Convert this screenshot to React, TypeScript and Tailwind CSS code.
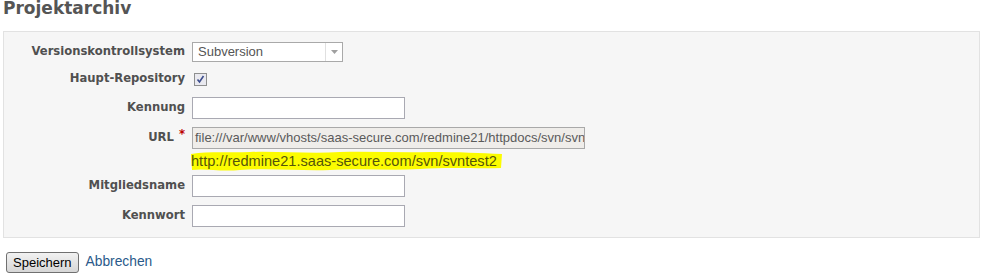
import React from "react";

const labelCls =
  "w-[189px] shrink-0 text-right pr-[7px] font-bold text-[11.6px] text-[#505050] leading-none";

function Row({
  label,
  children,
  className,
  req,
}: {
  label: string;
  children: React.ReactNode;
  className: string;
  req?: boolean;
}) {
  return (
    <div className={"flex items-center " + className}>
      <div className={labelCls}>
        {label}
        {req ? <span className="text-[#bb0000] ml-[5px] relative top-[-3px]">*</span> : null}
      </div>
      {children}
    </div>
  );
}

export default function App() {
  return (
    <div
      className="w-[987px] h-[278px] bg-white overflow-hidden relative"
      style={{ fontFamily: '"DejaVu Sans", Verdana, sans-serif' }}
    >
      <h2 className="absolute left-[3px] top-[-4px] text-[17px] font-bold text-[#555555] leading-[24px] m-0">
        Projektarchiv
      </h2>
      <div className="ml-[3px] mt-[31px] w-[977px] h-[207px] border border-[#e2e2e2] bg-[#f6f6f6] pt-[9px]">
        <Row label="Versionskontrollsystem" className="h-[21px] -ml-[1px]">
          <div className="w-[151px] h-[20px] border border-[#a9a9a9] bg-white flex items-center">
            <span
              className="flex-1 pl-[5px] text-[13px] text-[#555555]"
              style={{ fontFamily: '"Liberation Sans", Arial, sans-serif' }}
            >
              Subversion
            </span>
            <div className="w-[17px] h-[18px] border-l border-[#e0e0e0] flex items-center justify-center">
              <svg width="7" height="4" viewBox="0 0 7 4">
                <path d="M0 0 H7 L3.5 4 Z" fill="#a0a0a0" />
              </svg>
            </div>
          </div>
        </Row>
        <Row label="Haupt-Repository" className="h-[22px] mt-[6px] -ml-[1px]">
          <div className="w-[13px] h-[13px] ml-[2px] border border-[#8e8f8f] bg-[#e9e9ef] flex items-center justify-center">
            <svg width="9" height="9" viewBox="0 0 9 9">
              <path d="M1.5 4.5 L3.5 7 L7.5 1" stroke="#3c4d8c" strokeWidth="1.6" fill="none" />
            </svg>
          </div>
        </Row>
        <Row label="Kennung" className="h-[21px] mt-[7px] -ml-[1px]">
          <div className="w-[213px] h-[22px] border border-[#a9a9b2] bg-white" />
        </Row>
        <Row label="URL" className="h-[21px] mt-[9px] -ml-[1px]" req>
          <div className="w-[393px] h-[22px] border border-[#a9a9a9] bg-[#efedea] overflow-hidden flex items-center">
            <span
              className="pl-[2px] whitespace-nowrap text-[13px] text-[#5a5a5a]"
              style={{ fontFamily: '"Liberation Sans", Arial, sans-serif' }}
            >
              file:///var/www/vhosts/saas-secure.com/redmine21/httpdocs/svn/svntest2
            </span>
          </div>
        </Row>
        <div className="ml-[186px] mt-[2px] h-[22px] w-[313px] relative">
          <svg className="absolute inset-0" width="313" height="22" viewBox="0 0 313 22">
            <path
              d="M1 4 C20 1 40 3 60 2 C90 1 120 4 150 2 C180 1 210 3 240 2 C270 2 290 3 312 4 L311 18 C290 19 260 17 230 19 C200 21 170 18 140 20 C110 21 80 18 50 20 C30 22 15 18 2 20 Z"
              fill="#fcfc00"
            />
          </svg>
          <span
            className="relative block pl-[1px] pt-[2px] text-[14.6px] leading-[18px] text-[#55550a] whitespace-nowrap"
            style={{ fontFamily: '"Liberation Sans", Arial, sans-serif' }}
          >
            http://redmine21.saas-secure.com/svn/svntest2
          </span>
        </div>
        <Row label="Mitgliedsname" className="h-[21px] mt-[3px] -ml-[1px]">
          <div className="w-[213px] h-[22px] border border-[#a9a9b2] bg-white" />
        </Row>
        <Row label="Kennwort" className="h-[21px] mt-[9px] -ml-[1px]">
          <div className="w-[213px] h-[22px] border border-[#a9a9b2] bg-white" />
        </Row>
      </div>
      <div className="flex items-center mt-[14px] ml-[6px]">
        <button
          className="h-[21px] px-[6px] border border-[#707070] rounded-[3px] bg-gradient-to-b from-[#f2f2f2] to-[#d6d6d6] text-[13px] text-black leading-none"
          style={{ fontFamily: '"Liberation Sans", Arial, sans-serif' }}
        >
          Speichern
        </button>
        <a
          className="ml-[7px] text-[13.8px] text-[#2a5a8a]"
          style={{ fontFamily: '"Liberation Sans", Arial, sans-serif' }}
        >
          Abbrechen
        </a>
      </div>
    </div>
  );
}
